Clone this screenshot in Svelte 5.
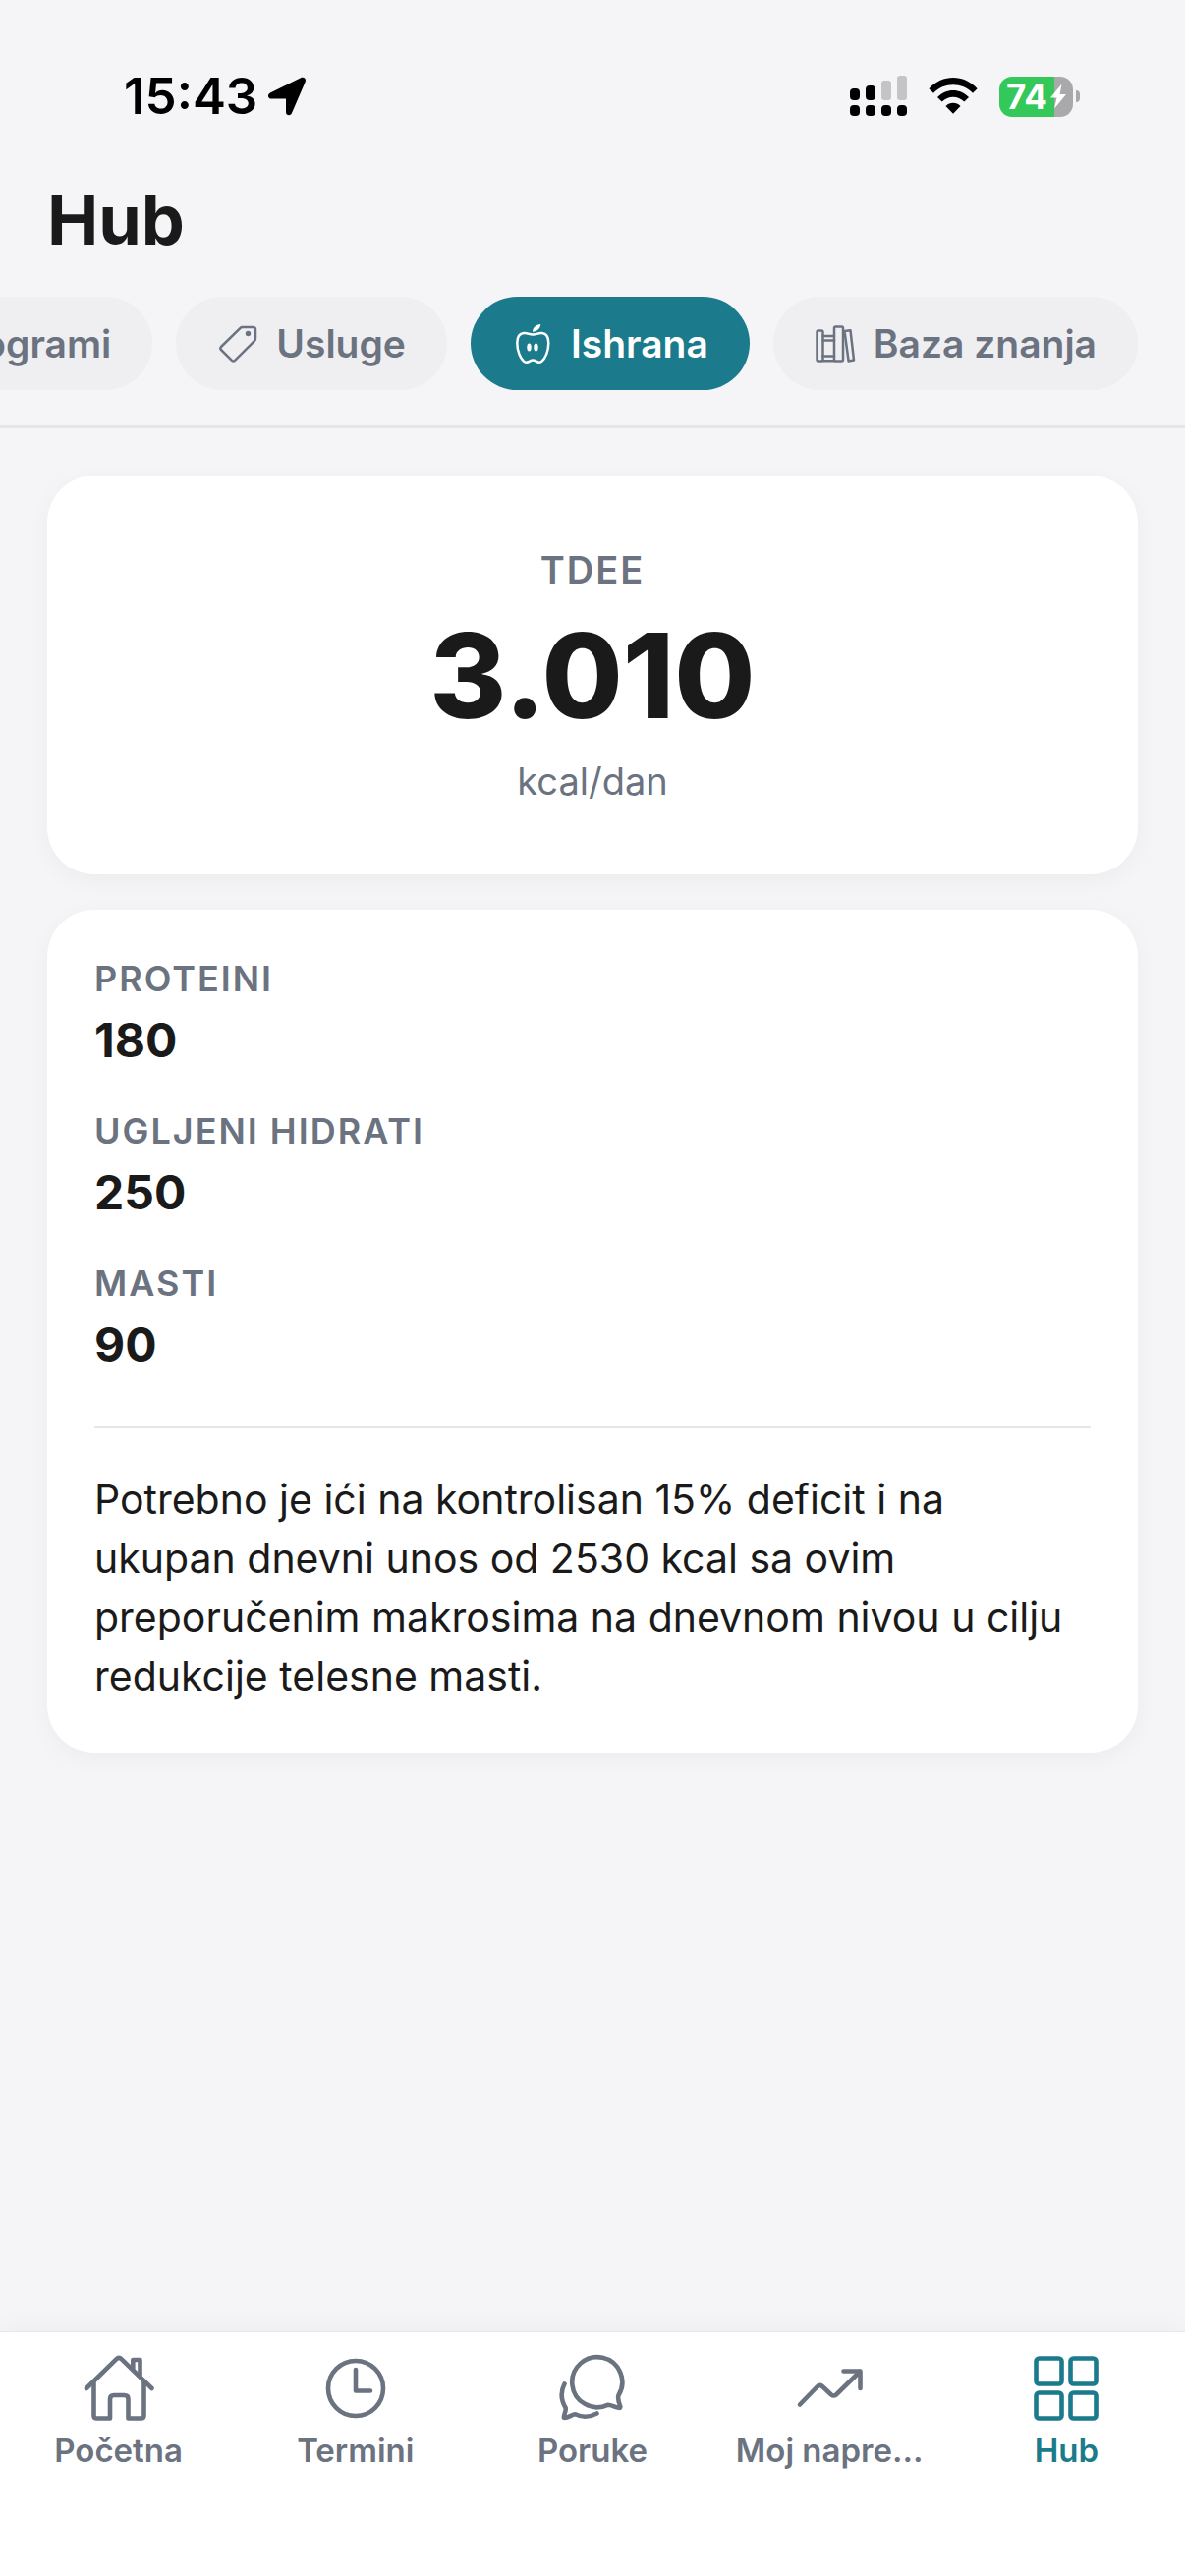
<script lang="ts">
  type Tab = { id: string; label: string };

  const sections: Tab[] = [
    { id: "programs", label: "Programi" },
    { id: "services", label: "Usluge" },
    { id: "nutrition", label: "Ishrana" },
    { id: "library", label: "Baza znanja" },
  ];

  const macros = [
    { label: "Proteini", value: 180 },
    { label: "Ugljeni hidrati", value: 250 },
    { label: "Masti", value: 90 },
  ];

  const pages: Tab[] = [
    { id: "home", label: "Početna" },
    { id: "schedule", label: "Termini" },
    { id: "messages", label: "Poruke" },
    { id: "progress", label: "Moj napre..." },
    { id: "hub", label: "Hub" },
  ];

  let section = $state("nutrition");
  let page = $state("hub");
</script>

<div class="screen">
  <header>
    <div class="status">
      <div class="clock">
        <span>15:43</span>
        <svg width="40" height="40" viewBox="0 0 40 40" aria-hidden="true">
          <path
            d="M3.500 16.200 34 1.200c3.200-1.400 5.900 1 4.700 4L25 37c-1.200 3.200-6 2.800-6-.8V22.500H4.500c-4.300 0-4.700-4.600-1-6.300Z"
          />
        </svg>
      </div>
      <div class="indicators">
        <svg width="58" height="42" viewBox="0 0 58 42" aria-hidden="true">
          <rect x="0" y="13" width="10" height="12" rx="4" />
          <rect x="16" y="10" width="10" height="15" rx="4" />
          <rect class="off" x="32" y="5" width="10" height="20" rx="3" />
          <rect class="off" x="48" y="0" width="10" height="25" rx="3" />
          <rect x="0" y="30" width="10" height="11" rx="4" />
          <rect x="16" y="30" width="10" height="11" rx="4" />
          <rect x="32" y="30" width="10" height="11" rx="4" />
          <rect x="48" y="30" width="10" height="11" rx="4" />
        </svg>
        <svg width="50" height="42" viewBox="0 0 50 42" aria-hidden="true">
          <path d="M.4 13.300C14-1.700 36-1.700 49.600 13.300l-4.600 4.500C34 6.500 16 6.500 5 17.800Z" />
          <path d="M9 22c9-9.500 23-9.500 32 0l-4.700 4.600c-6.500-6.400-16.100-6.400-22.600 0Z" />
          <path d="M17.500 31c4.300-4.200 10.700-4.200 15 0L25 38.800Z" />
        </svg>
        <div class="battery">
          <span>74</span>
          <svg class="bolt" width="18" height="26" viewBox="0 0 18 26" aria-hidden="true">
            <path d="M12.500.5 1 14.500h6.500L5 25.500l12-14.500h-6.500Z" />
          </svg>
          <i></i>
        </div>
      </div>
    </div>

    <h1>Hub</h1>

    <div class="chips">
      {#each sections as s}
        <button class="chip" class:active={section === s.id} onclick={() => (section = s.id)}>
          {#if s.id !== "programs"}
            <svg class="thin" width="42" height="42" viewBox="0 0 42 42" aria-hidden="true">
              {#if s.id === "services"}
                <path
                  d="M25.500 4H36.500Q39 4 39 6.500V15.500Q39 17 38 18L18 37.800Q16.500 39.200 15 37.800L4 27Q2.600 25.500 4 24L23.600 4.800Q24.400 4 25.500 4Z"
                />
                <circle class="solid" cx="31.500" cy="10.500" r="2.700" />
              {:else if s.id === "nutrition"}
                <path
                  d="M21.300 11.500C16.500 11.500 16 9.500 12 10 7 10.600 5.300 15 5.300 20 5.300 28 8.500 36 12.500 39 16.500 41.500 18 37.500 21.300 37.500 24.600 37.500 26.100 41.500 30.100 39 34.100 36 37.300 28 37.300 20 37.300 15 35.600 10.600 30.600 10 26.600 9.500 26.100 11.500 21.300 11.500Z"
                />
                <path class="solid" d="M21 8.800C21 4.500 24.500 1.300 29.300 1 29 5 25.800 8.600 21 8.800Z" />
                <ellipse class="solid" cx="17.500" cy="24.500" rx="2.200" ry="4" />
                <ellipse class="solid" cx="24.500" cy="24.500" rx="2.200" ry="4" />
              {:else}
                <rect x="2.500" y="7.500" width="6" height="31" rx="1.500" />
                <path d="M8.500 13H20M8.500 17.500H20M8.500 33.500H20M8.500 38.300H20" />
                <rect x="20" y="3.500" width="9" height="35" rx="1.500" />
                <path d="M30.500 8 34.600 38.500 40 37.500 36.500 7.300Z" />
              {/if}
            </svg>
          {/if}
          {s.label}
        </button>
      {/each}
    </div>
  </header>

  <main>
    <section class="card tdee">
      <h2>TDEE</h2>
      <strong>3.010</strong>
      <span>kcal/dan</span>
    </section>

    <section class="card plan">
      <dl>
        {#each macros as m}
          <div class="macro">
            <dt>{m.label}</dt>
            <dd>{m.value}</dd>
          </div>
        {/each}
      </dl>
      <p>
        Potrebno je ići na kontrolisan 15% deficit i na ukupan dnevni unos od 2530 kcal sa ovim
        preporučenim makrosima na dnevnom nivou u cilju redukcije telesne masti.
      </p>
    </section>
  </main>

  <nav>
    {#each pages as p}
      <button class="tab" class:active={page === p.id} onclick={() => (page = p.id)}>
        <svg class="bold" width="72" height="72" viewBox="0 0 72 72" aria-hidden="true">
          {#if p.id === "home"}
            <path d="M3 36 33.500 6.200Q36 3.600 38.500 6.200L69.500 36" />
            <path
              d="M10.500 30V63.500Q10.500 66.500 13.500 66.500H27V47Q27 43 31 43H41.500Q45.500 43 45.500 47V66.500H58.500Q61.500 66.500 61.500 63.500V30"
            />
            <path d="M50.300 16V7H57.500V23" />
          {:else if p.id === "schedule"}
            <circle cx="36" cy="36" r="28" />
            <path d="M36 17V38.500H51" />
          {:else if p.id === "messages"}
            <path
              d="M51.500 52.800A25.500 25.500 0 1 1 62.500 43C61.500 46 62.500 50 64.300 54.500Q64.500 56 63 55.800C58 55.300 55.500 52.500 51.500 52.800Z"
            />
            <path d="M7.500 31.500C3 40 4 48 8.700 56 9.200 60 6.200 64 7 66 12 66 15 62.500 18.500 62.300 26 66 34 65 40.500 61.500" />
          {:else if p.id === "progress"}
            <path d="M6 52.500 23.500 34.500Q26.500 31.500 29.500 34.500L38 42.500Q40.500 44.500 43 42.500L67 19" />
            <path d="M50.500 18.500H67.500V36" />
          {:else}
            <rect x="5.500" y="5.500" width="26" height="26" rx="3" />
            <rect x="40.500" y="5.500" width="26" height="26" rx="3" />
            <rect x="5.500" y="40.500" width="26" height="26" rx="3" />
            <rect x="40.500" y="40.500" width="26" height="26" rx="3" />
          {/if}
        </svg>
        <span>{p.label}</span>
      </button>
    {/each}
  </nav>
</div>

<style>
  :global(body) {
    margin: 0;
    background: #f5f5f8;
  }
  .screen {
    display: flex;
    flex-direction: column;
    min-height: 100vh;
    color: #1a1a1a;
    font-family: Inter, "Liberation Sans", sans-serif;
  }
  h1,
  h2,
  p,
  dl,
  dd {
    margin: 0;
  }
  svg {
    display: block;
    flex: none;
  }
  button {
    border: 0;
    font-family: inherit;
    cursor: pointer;
  }
  header {
    border-bottom: 3px solid #e5e6e9;
    padding-bottom: 36px;
  }
  .status {
    display: flex;
    justify-content: space-between;
    padding: 68px 107px 54px 126px;
    color: #000;
  }
  .clock {
    display: flex;
    align-items: center;
    gap: 10px;
    font-size: 51px;
    line-height: 60px;
    font-weight: 600;
  }
  .indicators {
    display: flex;
    align-items: center;
    gap: 22px;
  }
  .off {
    fill: #c4c4c6;
  }
  .battery {
    position: relative;
    display: flex;
    align-items: center;
    width: 75px;
    height: 41px;
    margin-right: 7px;
    border-radius: 13px;
    background: linear-gradient(to right, #34c759 75%, #a9a9ac 75%);
    color: #fff;
    font-size: 35px;
    line-height: 41px;
    font-weight: 700;
  }
  .battery span {
    padding-left: 7px;
  }
  .bolt {
    position: absolute;
    right: 6px;
    fill: #fff;
  }
  .battery i {
    position: absolute;
    right: -7px;
    width: 4px;
    height: 12px;
    border-radius: 0 6px 6px 0;
    background: #a9a9ac;
  }
  h1 {
    padding: 0 48px;
    font-size: 70px;
    line-height: 84px;
    font-weight: 700;
  }
  .chips {
    display: flex;
    justify-content: flex-end;
    gap: 24px;
    margin-top: 36px;
    padding: 0 48px;
    overflow: hidden;
  }
  .chip {
    display: flex;
    flex: none;
    align-items: center;
    gap: 18px;
    padding: 24px 42px;
    border-radius: 48px;
    background: #efeff1;
    color: #6b7280;
    font-size: 39px;
    line-height: 47px;
    font-weight: 600;
  }
  .chip.active {
    background: #1b7a8c;
    color: #fff;
  }
  .thin,
  .bold {
    fill: none;
    stroke: currentColor;
    stroke-linecap: round;
    stroke-linejoin: round;
  }
  .thin {
    stroke-width: 2.5;
  }
  .bold {
    stroke-width: 4.6;
  }
  .solid {
    fill: currentColor;
    stroke: none;
  }
  main {
    display: flex;
    flex: 1;
    flex-direction: column;
    gap: 36px;
    padding: 48px;
  }
  .card {
    border-radius: 48px;
    background: #fff;
    box-shadow: 0 6px 24px rgba(0, 0, 0, 0.04);
  }
  .tdee {
    display: flex;
    flex-direction: column;
    align-items: center;
    padding: 72px 48px;
  }
  h2 {
    color: #6b7280;
    font-size: 38px;
    line-height: 48px;
    font-weight: 600;
    letter-spacing: 2px;
  }
  .tdee strong {
    margin: 12px 0;
    font-size: 119px;
    line-height: 144px;
    font-weight: 800;
  }
  .tdee span {
    color: #6b7280;
    font-size: 38px;
    line-height: 46px;
  }
  .plan {
    padding: 48px;
  }
  dl {
    display: flex;
    flex-direction: column;
    gap: 42px;
    padding-bottom: 54px;
    border-bottom: 3px solid #e5e6e9;
  }
  dt {
    margin-bottom: 12px;
    color: #6b7280;
    font-size: 36px;
    line-height: 44px;
    font-weight: 600;
    letter-spacing: 2px;
    text-transform: uppercase;
  }
  dd {
    font-size: 48px;
    line-height: 57px;
    font-weight: 700;
  }
  .plan p {
    padding-top: 42px;
    font-size: 41px;
    line-height: 60px;
  }
  nav {
    display: grid;
    grid-template-columns: repeat(5, 1fr);
    padding: 21px 0 107px;
    border-top: 1px solid #e5e6e9;
    background: #fff;
    box-shadow: 0 -6px 24px rgba(0, 0, 0, 0.03);
  }
  .tab {
    display: flex;
    flex-direction: column;
    align-items: center;
    gap: 6px;
    padding: 0;
    background: none;
    color: #6b7280;
    font-size: 33px;
    line-height: 42px;
    font-weight: 600;
  }
  .tab.active {
    color: #1b7a8c;
  }
</style>
